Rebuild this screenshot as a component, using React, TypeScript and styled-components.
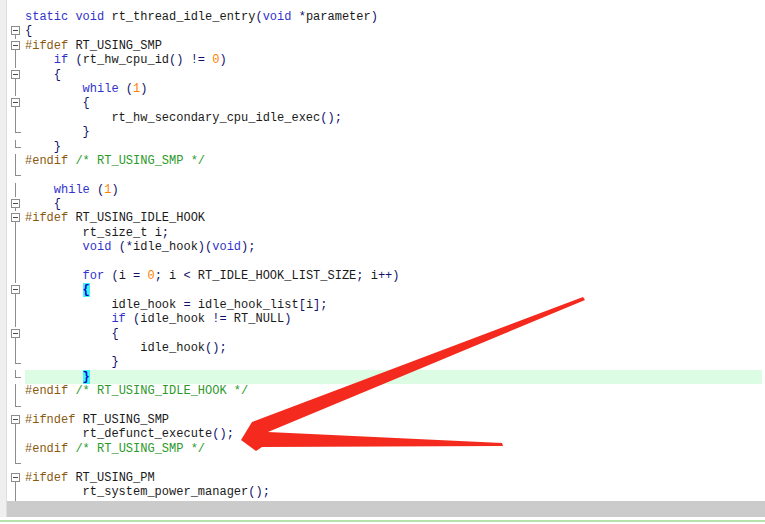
import React from 'react';
import styled, { createGlobalStyle } from 'styled-components';

const GlobalStyle = createGlobalStyle`
  html, body {
    margin: 0;
    padding: 0;
    background: #ffffff;
  }
`;

type Fold = 'none' | 'box' | 'line' | 'end';

interface CodeLine {
  fold: Fold;
  text: string;
  current?: boolean;
  match?: boolean;
}

const LINES: CodeLine[] = [
  { fold: 'none', text: 'static void rt_thread_idle_entry(void *parameter)' },
  { fold: 'box', text: '{' },
  { fold: 'box', text: '#ifdef RT_USING_SMP' },
  { fold: 'line', text: '    if (rt_hw_cpu_id() != 0)' },
  { fold: 'box', text: '    {' },
  { fold: 'line', text: '        while (1)' },
  { fold: 'box', text: '        {' },
  { fold: 'line', text: '            rt_hw_secondary_cpu_idle_exec();' },
  { fold: 'end', text: '        }' },
  { fold: 'end', text: '    }' },
  { fold: 'line', text: '#endif /* RT_USING_SMP */' },
  { fold: 'end', text: '' },
  { fold: 'line', text: '    while (1)' },
  { fold: 'box', text: '    {' },
  { fold: 'box', text: '#ifdef RT_USING_IDLE_HOOK' },
  { fold: 'line', text: '        rt_size_t i;' },
  { fold: 'line', text: '        void (*idle_hook)(void);' },
  { fold: 'line', text: '' },
  { fold: 'line', text: '        for (i = 0; i < RT_IDLE_HOOK_LIST_SIZE; i++)' },
  { fold: 'box', text: '        {', match: true },
  { fold: 'line', text: '            idle_hook = idle_hook_list[i];' },
  { fold: 'line', text: '            if (idle_hook != RT_NULL)' },
  { fold: 'box', text: '            {' },
  { fold: 'line', text: '                idle_hook();' },
  { fold: 'end', text: '            }' },
  { fold: 'end', text: '        }', match: true, current: true },
  { fold: 'line', text: '#endif /* RT_USING_IDLE_HOOK */' },
  { fold: 'end', text: '' },
  { fold: 'box', text: '#ifndef RT_USING_SMP' },
  { fold: 'line', text: '        rt_defunct_execute();' },
  { fold: 'line', text: '#endif /* RT_USING_SMP */' },
  { fold: 'end', text: '' },
  { fold: 'box', text: '#ifdef RT_USING_PM' },
  { fold: 'line', text: '        rt_system_power_manager();' },
];

const KEYWORDS = new Set(['static', 'void', 'if', 'while', 'for']);

type TokenKind = 'plain' | 'kw' | 'num' | 'op' | 'pre' | 'comment' | 'space' | 'brace';

// very small C tokenizer, enough for this snippet
function tokenize(text: string, match?: boolean): [TokenKind, string][] {
  const out: [TokenKind, string][] = [];
  const re = /(\s+)|(\/\*.*?\*\/)|(#\w+)|([A-Za-z_]\w*)|(\d+)|(.)/g;
  let m: RegExpExecArray | null;
  while ((m = re.exec(text))) {
    if (m[1]) out.push(['space', m[1]]);
    else if (m[2]) out.push(['comment', m[2]]);
    else if (m[3]) out.push(['pre', m[3]]);
    else if (m[4]) out.push([KEYWORDS.has(m[4]) ? 'kw' : 'plain', m[4]]);
    else if (m[5]) out.push(['num', m[5]]);
    else if (m[6]) {
      const isBrace = m[6] === '{' || m[6] === '}';
      out.push([isBrace && match ? 'brace' : 'op', m[6]]);
    }
  }
  return out;
}

const Page = styled.div`
  position: relative;
  width: 765px;
  height: 524px;
  display: flex;
  flex-direction: column;
  overflow: hidden;
  background: #ffffff;
`;

const Editor = styled.div`
  display: flex;
  height: 501px;
  overflow: hidden;
`;

const Strip = styled.div`
  width: 6px;
  background: #efefef;
  border-right: 1px solid #dedede;
`;

const Body = styled.div`
  flex: 1;
  display: flex;
  flex-direction: column;
  padding-top: 10px;
  padding-right: 3px;
  font-family: 'Liberation Mono', 'DejaVu Sans Mono', monospace;
  font-size: 12px;
`;

const Row = styled.div`
  display: flex;
  height: 14.4px;
  line-height: 14.4px;
`;

const FoldCell = styled.div<{ $fold: Fold }>`
  position: relative;
  width: 18px;
  flex: none;

  &::before {
    content: '';
    position: absolute;
    left: 8px;
    width: 1px;
    background: #8c8c8c;
    top: ${p => (p.$fold === 'box' ? '50%' : '0')};
    bottom: ${p => (p.$fold === 'end' ? '50%' : '0')};
    display: ${p => (p.$fold === 'none' ? 'none' : 'block')};
  }

  &::after {
    content: '';
    position: absolute;
    left: 8px;
    top: 50%;
    width: 6px;
    height: 1px;
    background: #8c8c8c;
    display: ${p => (p.$fold === 'end' ? 'block' : 'none')};
  }
`;

const FoldBox = styled.span`
  position: absolute;
  left: 4px;
  top: 2px;
  width: 7px;
  height: 7px;
  border: 1px solid #8c8c8c;
  background: #ffffff;
  z-index: 1;

  &::after {
    content: '';
    position: absolute;
    left: 1px;
    right: 1px;
    top: 3px;
    height: 1px;
    background: #4a4a4a;
  }
`;

const FoldTail = styled.div`
  flex: 1;
  width: 18px;
  position: relative;

  &::before {
    content: '';
    position: absolute;
    left: 8px;
    top: 0;
    bottom: 0;
    width: 1px;
    background: #8c8c8c;
  }
`;

const CodeCell = styled.div<{ $current?: boolean }>`
  flex: 1;
  white-space: pre;
  color: #1a1a1a;
  background: ${p => (p.$current ? '#dcfce3' : 'transparent')};
`;

const TOKEN_COLORS: Record<TokenKind, string> = {
  plain: '#1a1a1a',
  kw: '#3232cc',
  num: '#ff8000',
  op: '#10106a',
  pre: '#8a5a10',
  comment: '#2a9a2a',
  space: 'inherit',
  brace: '#0000d0',
};

const Tok = styled.span<{ $kind: TokenKind }>`
  color: ${p => TOKEN_COLORS[p.$kind]};
  background: ${p => (p.$kind === 'brace' ? '#3ff4f4' : 'transparent')};
  font-weight: ${p => (p.$kind === 'brace' ? 700 : 400)};
`;

const ScrollRow = styled.div`
  display: flex;
  height: 16px;
`;

const ScrollBar = styled.div`
  flex: 1;
  background: #cbcbcb;
`;

const StatusGap = styled.div`
  height: 3px;
`;

const StatusLine = styled.div`
  height: 2px;
  background: #b4e2a8;
`;

const Overlay = styled.svg`
  position: absolute;
  left: 0;
  top: 0;
  pointer-events: none;
`;

const Arrow: React.FC = () => (
  <Overlay width={765} height={524} viewBox="0 0 765 524">
    <polygon
      fill="#f42a1e"
      points="241,440 252,422 583,297 585,300 268,432 502,443 503,446 262,447 256,451"
    />
  </Overlay>
);

const App: React.FC = () => {
  return (
    <Page>
      <GlobalStyle />
      <Editor>
        <Strip />
        <Body>
          {LINES.map((line, i) => (
            <Row key={i}>
              <FoldCell $fold={line.fold}>{line.fold === 'box' && <FoldBox />}</FoldCell>
              <CodeCell $current={line.current}>
                {tokenize(line.text, line.match).map(([kind, t], j) => (
                  <Tok key={j} $kind={kind}>
                    {t}
                  </Tok>
                ))}
                {line.text === '' ? ' ' : null}
              </CodeCell>
            </Row>
          ))}
          <FoldTail />
        </Body>
      </Editor>
      <ScrollRow>
        <Strip />
        <ScrollBar />
      </ScrollRow>
      <StatusGap />
      <StatusLine />
      <Arrow />
    </Page>
  );
};

export default App;
